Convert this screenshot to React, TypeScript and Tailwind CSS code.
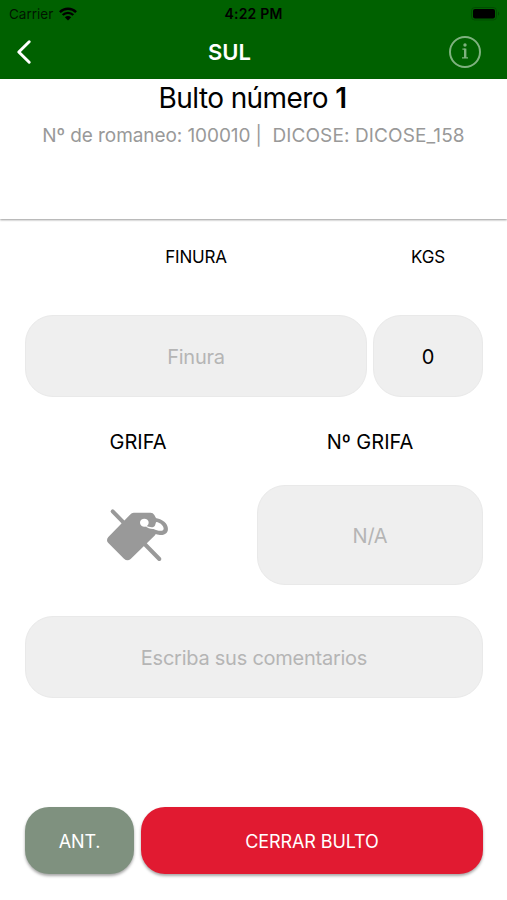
import type { ReactNode } from "react";

const WifiIcon = () => (
  <svg width={18} height={14} viewBox="0 0 18 14" fill="none" stroke="black" strokeWidth={2.4}>
    <path d="M0.9 5.1C5.4 0.6 12.6 0.6 17.1 5.1" />
    <path d="M3.7 8C6.6 5.1 11.4 5.1 14.3 8" />
    <path d="M9 13.6L5.8 10.3C7.6 8.6 10.4 8.6 12.2 10.3Z" fill="black" stroke="none" />
  </svg>
);

const BatteryIcon = () => (
  <svg width={30} height={14} viewBox="0 0 30 14">
    <rect x="0.5" y="0.5" width="25" height="12.5" rx="3.2" fill="none" stroke="black" strokeOpacity="0.2" />
    <rect x="2" y="2" width="22" height="9.5" rx="2" fill="black" />
    <path d="M27 4.6C28.6 5.2 28.6 8.2 27 8.8Z" fill="black" fillOpacity="0.25" />
  </svg>
);

const BackIcon = () => (
  <svg width={16} height={26} viewBox="0 0 16 26" fill="none" stroke="white" strokeWidth={3}>
    <path d="M13.2 2.8L2.8 13L13.2 23.2" strokeLinecap="round" strokeLinejoin="round" />
  </svg>
);

const InfoIcon = () => (
  <svg width={34} height={34} viewBox="0 0 34 34" fill="none">
    <circle cx="17" cy="17" r="15" stroke="#7fb27f" strokeWidth={2} />
    <circle cx="17" cy="10" r="1.7" fill="#7fb27f" />
    <path d="M14.4 14.2H17.4M14 22.8H20" stroke="#7fb27f" strokeWidth={1.3} />
    <path d="M17.2 13.6V23" stroke="#7fb27f" strokeWidth={2.4} />
  </svg>
);

// Ear tag with its ring, crossed out
const NoTagIcon = () => (
  <svg width={64} height={54} viewBox="0 0 192 162" fill="none">
    <path d="M20 10L160 153" stroke="#999999" strokeWidth={12} strokeLinecap="round" />
    <path
      d="M83 14H134Q141 14 145 21L152 34V70Q152 76 147 82L74 153Q64 161 54 152L7 105Q-1 97 7 87L72 20Q77 14 83 14Z"
      fill="#999999"
    />
    <path d="M130 30C158 27 181 40 185 57C189 73 178 82 162 81C150 80 142 76 134 69Z" fill="#999999" />
    <ellipse cx="115" cy="44" rx="13" ry="12" fill="white" />
    <path d="M117 54C126 53 133 60 142 57C150 54 147 46 151 42C163 44 173 53 173 62C172 72 154 69 143 63C134 64 125 60 117 54Z" fill="white" />
  </svg>
);

interface IFieldProps {
  children: ReactNode;
  className: string;
}

const Field = ({ children, className }: IFieldProps) => (
  <div
    className={`flex items-center justify-center rounded-[28px] border border-[#e9e9e9] bg-[#efefef] pt-px text-xl tracking-[-0.25px] ${className}`}
  >
    {children}
  </div>
);

export default function App() {
  return (
    <div className="flex h-[900px] w-[507px] flex-col overflow-hidden bg-white font-['Inter',sans-serif] text-black">
      <header className="h-[79px] shrink-0 bg-[#006100]">
        <div className="grid h-[27px] grid-cols-3 items-center pl-[9px] pr-[6px] text-[13px]">
          <div className="flex items-center gap-[6px]">
            <span className="pt-px text-[13.5px] text-black/80">Carrier</span>
            <WifiIcon />
          </div>
          <span className="pr-[3px] text-center text-[14px] font-semibold tracking-[0.2px]">4:22 PM</span>
          <div className="flex justify-end">
            <BatteryIcon />
          </div>
        </div>
        <div className="flex h-[50px] items-center pl-4 pr-[25px]">
          <BackIcon />
          <h1 className="flex-1 pr-[21px] text-center text-[22px] font-semibold text-white">SUL</h1>
          <InfoIcon />
        </div>
      </header>

      <section className="h-[140px] shrink-0 text-center shadow-[0_1px_2px_rgba(0,0,0,0.4)]">
        <h2 className="pr-[2px] pt-[1px] text-[28px] leading-9 tracking-[-0.6px]">
          Bulto número <span className="font-semibold">1</span>
        </h2>
        <p className="mt-[6px] whitespace-pre text-[19px] leading-7 text-[#999999]">
          <span className="tracking-[-0.08px]">Nº de romaneo: 100010 |{"  "}</span>
          <span className="tracking-[0.12px]">DICOSE: DICOSE_158</span>
        </p>
      </section>

      <main className="flex flex-1 flex-col pb-[26px] pl-[25px] pr-[24px]">
        <div className="mt-[26px] flex gap-[6px] text-center text-[17px] leading-6 tracking-[-0.2px]">
          <span className="w-[342px]">FINURA</span>
          <span className="w-[110px]">KGS</span>
        </div>
        <div className="mt-[46px] flex gap-[6px]">
          <Field className="h-[82px] w-[342px] text-[#b5b5b5]">Finura</Field>
          <Field className="h-[82px] w-[110px]">0</Field>
        </div>

        <div className="mt-[31px] flex gap-[6px] text-center text-[20px] leading-7">
          <span className="w-[226px]">GRIFA</span>
          <span className="w-[226px]">Nº GRIFA</span>
        </div>
        <div className="mt-[29px] flex gap-[6px]">
          <div className="flex h-[100px] w-[226px] items-center justify-center">
            <NoTagIcon />
          </div>
          <Field className="h-[100px] w-[226px] text-[#b5b5b5]">N/A</Field>
        </div>
        <Field className="mt-[31px] h-[82px] text-[#b5b5b5]">Escriba sus comentarios</Field>

        <div className="mt-auto flex gap-[7px] text-[18px] text-white">
          <button className="h-[67px] w-[109px] rounded-[24px] bg-[#7f917f] pt-px tracking-[-0.2px] shadow-[0_2px_3px_rgba(0,0,0,0.35)]">
            ANT.
          </button>
          <button className="h-[67px] flex-1 rounded-[24px] bg-[#e11a31] pt-px tracking-[-0.1px] shadow-[0_2px_3px_rgba(0,0,0,0.35)]">
            CERRAR BULTO
          </button>
        </div>
      </main>
    </div>
  );
}
